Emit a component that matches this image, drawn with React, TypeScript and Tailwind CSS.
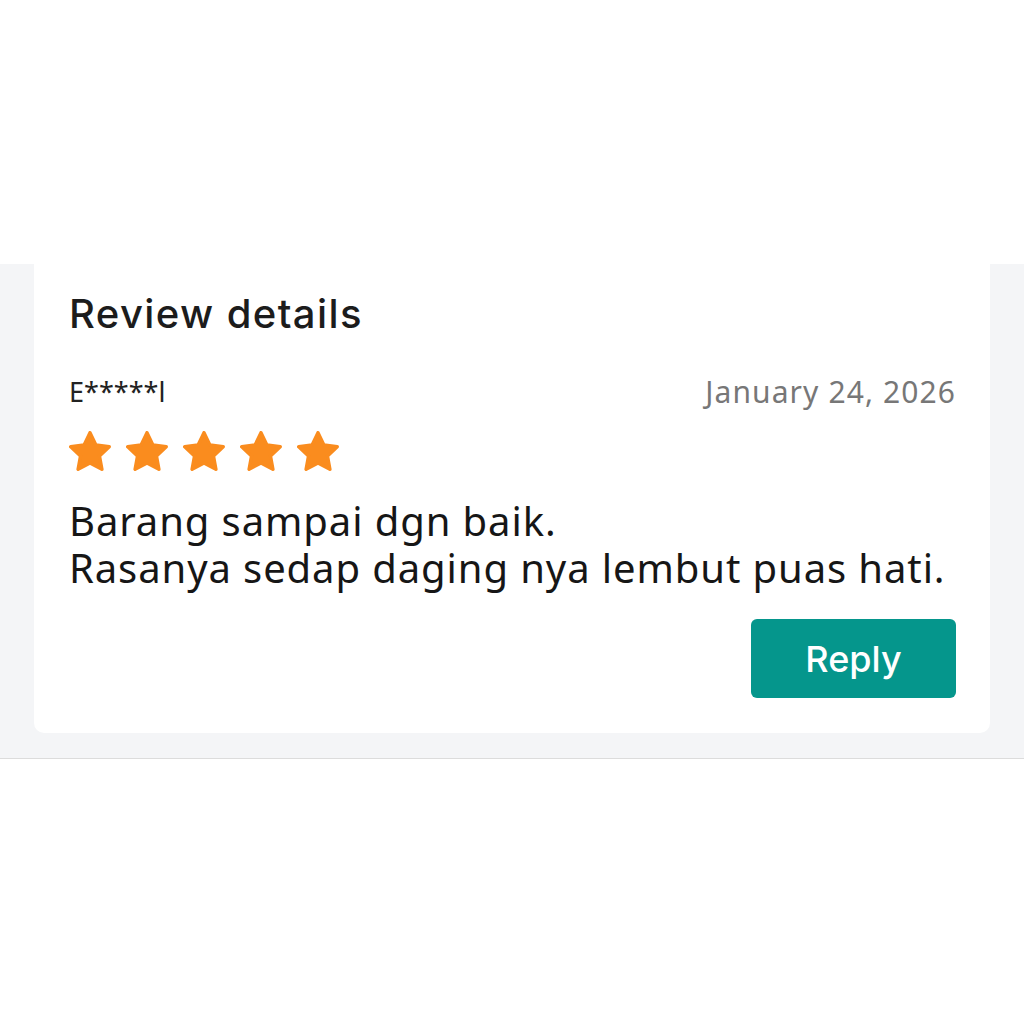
import React from 'react';

const Star = () => (
  <svg width="42" height="40" viewBox="2.2 2 19.6 18.7" className="shrink-0">
    <path
      d="M12 2.8l2.75 5.72 6.25.83-4.57 4.33 1.14 6.2L12 16.9l-5.57 2.98 1.14-6.2L3 9.35l6.25-.83L12 2.8z"
      fill="#fa8c1e"
      stroke="#fa8c1e"
      strokeWidth="1.6"
      strokeLinejoin="round"
    />
  </svg>
);

export default function App() {
  return (
    <div className="min-h-screen bg-white" style={{ fontFamily: '"Noto Sans", Roboto, sans-serif' }}>
      <div className="h-[264px]" />
      <div className="bg-[#f4f5f7] px-[34px] pb-[25px] border-b border-[#dcdcdc]">
        <div className="bg-white rounded-b-[10px] pl-[35px] pr-[34px] pt-[26px] pb-[35px]">
          <h2 className="text-[40px] leading-[48px] font-medium tracking-[1.4px] text-[#1c1c1c]" style={{ fontFamily: 'Inter, sans-serif' }}>
            Review details
          </h2>
          <div className="mt-[37px] flex items-center justify-between">
            <span className="text-[27px] leading-[34px] text-[#222]">E*****l</span>
            <span className="text-[30px] leading-[34px] tracking-[1.1px] text-[#777777]">January 24, 2026</span>
          </div>
          <div className="mt-[22px] flex gap-[15px]">
            {[0, 1, 2, 3, 4].map(i => (
              <Star key={i} />
            ))}
          </div>
          <p className="mt-[26px] text-[40px] leading-[47px] tracking-[0.9px] text-[#161616]">
            Barang sampai dgn baik.
            <br />
            Rasanya sedap daging nya lembut puas hati.
          </p>
          <div className="mt-[28px] flex justify-end">
            <button className="w-[205px] h-[79px] rounded-[6px] bg-[#05968c] text-white text-[36px] font-medium" style={{ fontFamily: 'Inter, sans-serif' }}>
              Reply
            </button>
          </div>
        </div>
      </div>
    </div>
  );
}
